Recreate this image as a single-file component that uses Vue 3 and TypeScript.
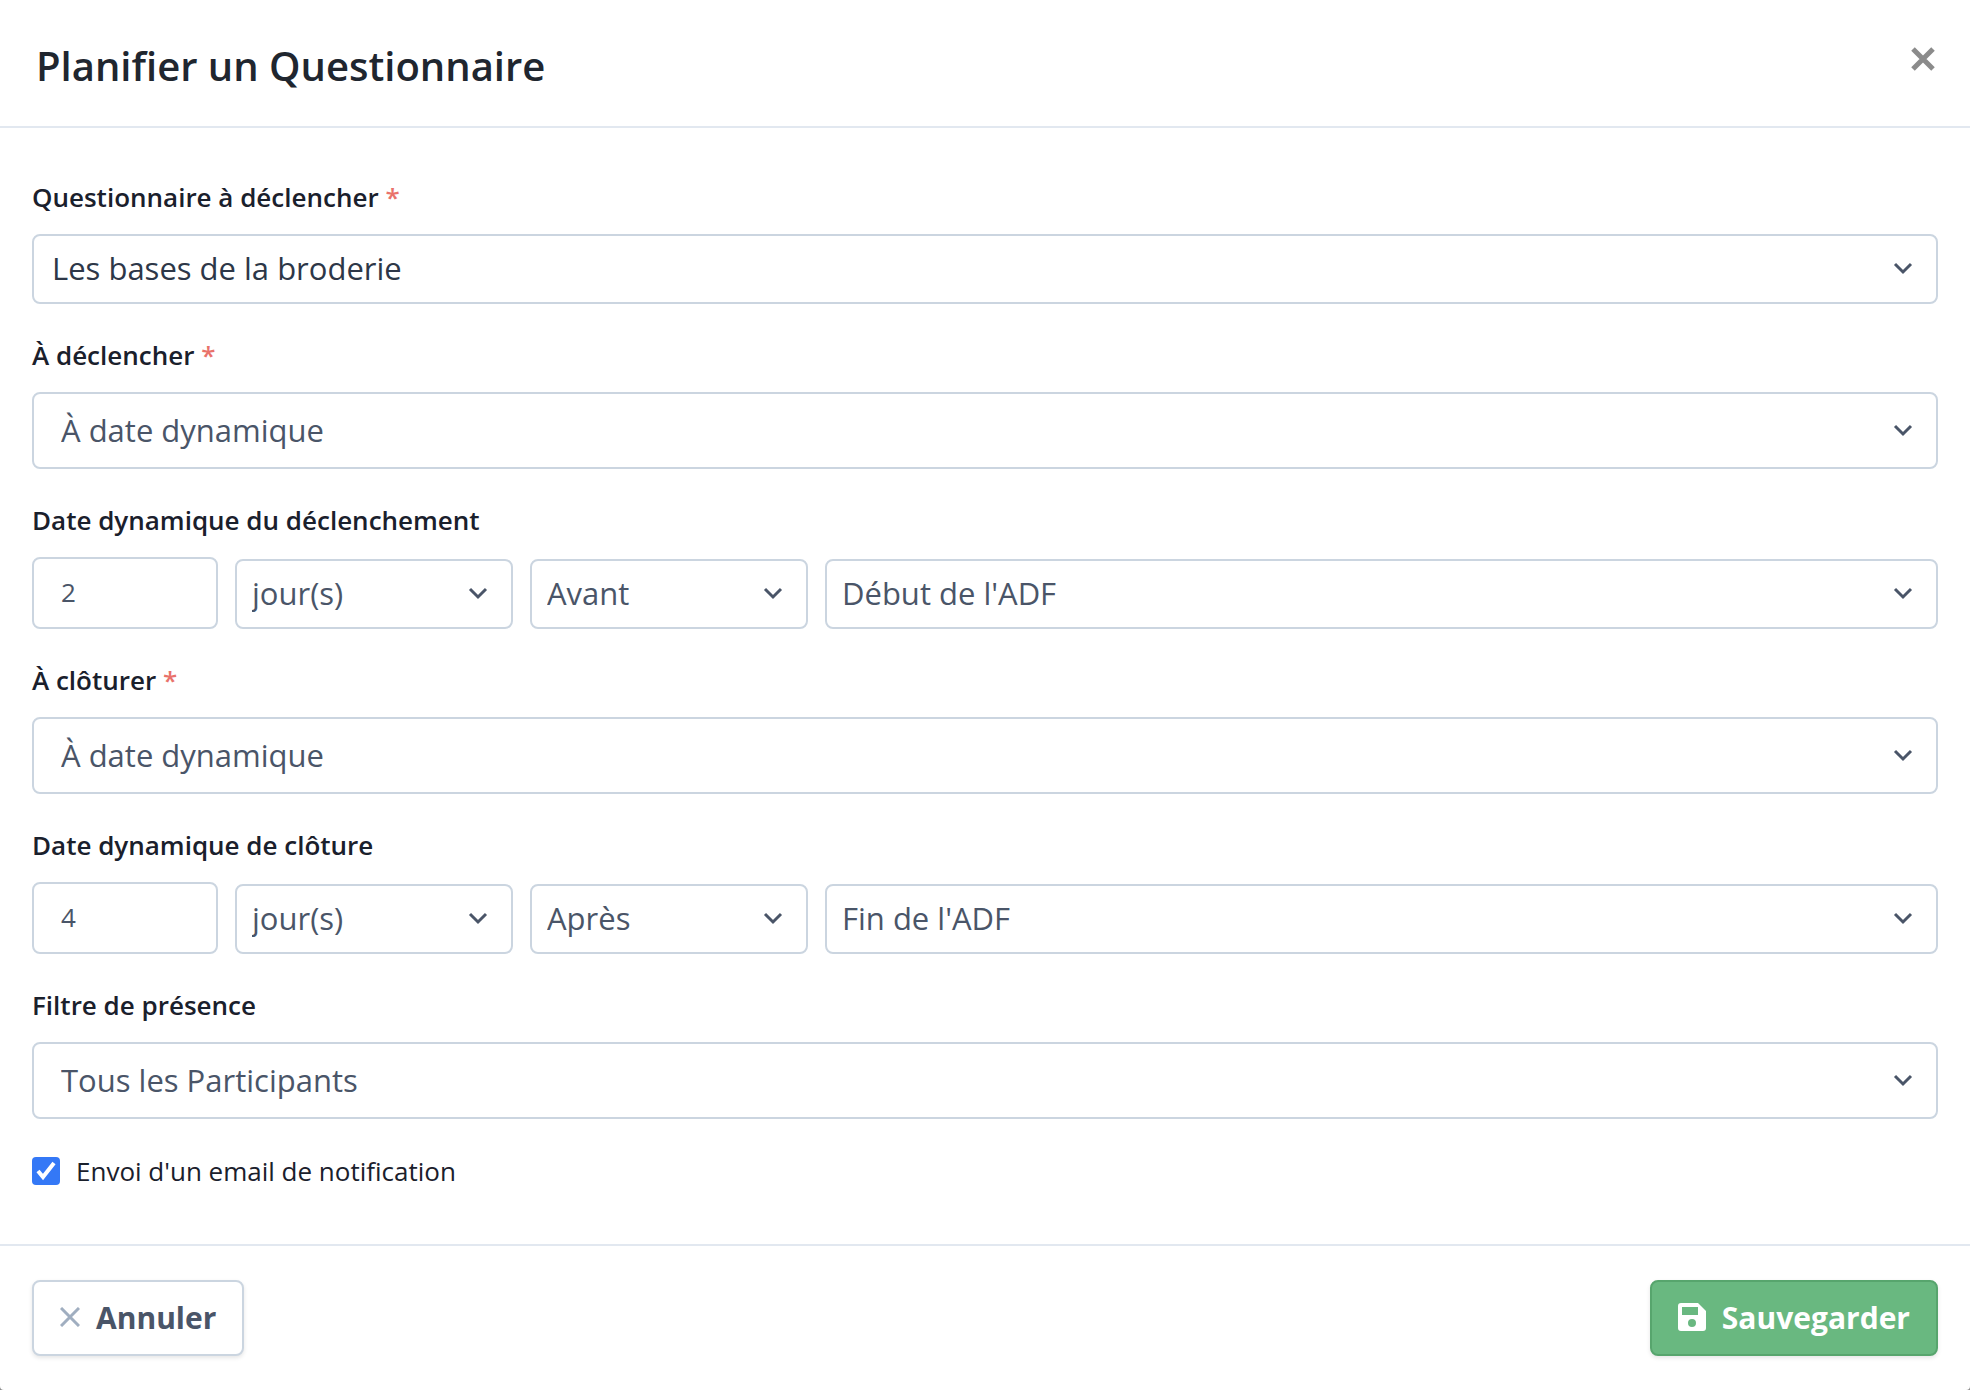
<script setup lang="ts">
import { ref } from 'vue'

interface Field {
  id: string
  label: string
  required: boolean
  options: string[]
  value: string
}

interface DynamicDate {
  id: string
  label: string
  amount: string
  unit: string
  relation: string
  anchor: string
}

const survey = ref<Field>({ id: 'survey', label: 'Questionnaire à déclencher', required: true, options: ['Les bases de la broderie'], value: 'Les bases de la broderie' })
const trigger = ref<Field>({ id: 'trigger', label: 'À déclencher', required: true, options: ['À date dynamique'], value: 'À date dynamique' })
const closing = ref<Field>({ id: 'closing', label: 'À clôturer', required: true, options: ['À date dynamique'], value: 'À date dynamique' })
const presence = ref<Field>({ id: 'presence', label: 'Filtre de présence', required: false, options: ['Tous les Participants'], value: 'Tous les Participants' })

const triggerDate = ref<DynamicDate>({ id: 'trigger-date', label: 'Date dynamique du déclenchement', amount: '2', unit: 'jour(s)', relation: 'Avant', anchor: "Début de l'ADF" })
const closingDate = ref<DynamicDate>({ id: 'closing-date', label: 'Date dynamique de clôture', amount: '4', unit: 'jour(s)', relation: 'Après', anchor: "Fin de l'ADF" })

const rows = [
  { kind: 'select', field: survey, compact: true },
  { kind: 'select', field: trigger, compact: false },
  { kind: 'date', date: triggerDate },
  { kind: 'select', field: closing, compact: false },
  { kind: 'date', date: closingDate },
  { kind: 'select', field: presence, compact: false },
] as const

const units = ['jour(s)']
const relations = ['Avant', 'Après']
const anchors = ["Début de l'ADF", "Fin de l'ADF"]
const notify = ref(true)
</script>

<template>
  <form class="dialog" role="dialog" aria-labelledby="dialog-title" @submit.prevent>
    <header class="header">
      <h1 id="dialog-title" class="title">Planifier un Questionnaire</h1>
      <button type="button" class="close" aria-label="Fermer">
        <svg width="24" height="24" viewBox="0 0 24 24" aria-hidden="true">
          <path d="M2 2 22 22M22 2 2 22" fill="none" stroke="#8b8b8b" stroke-width="5" />
        </svg>
      </button>
    </header>

    <div class="body">
      <template v-for="(row, i) in rows" :key="i">
        <div v-if="row.kind === 'select'" class="field">
          <label class="label" :for="row.field.value.id">{{ row.field.value.label }}<span v-if="row.field.value.required" class="star">&nbsp;*</span></label>
          <div class="select" :class="row.compact ? 'main' : 'tall'">
            <select :id="row.field.value.id" v-model="row.field.value.value">
              <option v-for="o in row.field.value.options" :key="o">{{ o }}</option>
            </select>
            <svg class="chevron" width="20" height="14" viewBox="0 0 20 14" aria-hidden="true"><path d="M2 2 10 10 18 2" /></svg>
          </div>
        </div>

        <div v-else class="field">
          <label class="label" :for="row.date.value.id">{{ row.date.value.label }}</label>
          <div class="date-row">
            <input :id="row.date.value.id" v-model="row.date.value.amount" class="amount" type="text" inputmode="numeric">
            <div class="select">
              <select v-model="row.date.value.unit" aria-label="Unité">
                <option v-for="o in units" :key="o">{{ o }}</option>
              </select>
              <svg class="chevron" width="20" height="14" viewBox="0 0 20 14" aria-hidden="true"><path d="M2 2 10 10 18 2" /></svg>
            </div>
            <div class="select">
              <select v-model="row.date.value.relation" aria-label="Avant ou après">
                <option v-for="o in relations" :key="o">{{ o }}</option>
              </select>
              <svg class="chevron" width="20" height="14" viewBox="0 0 20 14" aria-hidden="true"><path d="M2 2 10 10 18 2" /></svg>
            </div>
            <div class="select">
              <select v-model="row.date.value.anchor" aria-label="Repère">
                <option v-for="o in anchors" :key="o">{{ o }}</option>
              </select>
              <svg class="chevron" width="20" height="14" viewBox="0 0 20 14" aria-hidden="true"><path d="M2 2 10 10 18 2" /></svg>
            </div>
          </div>
        </div>
      </template>

      <label class="check">
        <span class="box">
          <input v-model="notify" type="checkbox">
          <svg v-if="notify" width="28" height="28" viewBox="0 0 28 28" aria-hidden="true"><path d="M6 14 11 20 22 6" /></svg>
        </span>
        Envoi d'un email de notification
      </label>
    </div>

    <footer class="footer">
      <button type="button" class="btn cancel">
        <svg width="20" height="20" viewBox="0 0 20 20" aria-hidden="true">
          <path d="M1 1 19 19M19 1 1 19" fill="none" stroke="#a0aec0" stroke-width="3" />
        </svg>
        Annuler
      </button>
      <button type="submit" class="btn save">
        <svg width="28" height="28" viewBox="0 0 28 28" aria-hidden="true">
          <path fill="#fff" fill-rule="evenodd" d="M3 0H20L28 8V25A3 3 0 0 1 25 28H3A3 3 0 0 1 0 25V3A3 3 0 0 1 3 0ZM4 4V12H20V4ZM14 16A4 4 0 1 0 14 24A4 4 0 1 0 14 16Z" />
        </svg>
        Sauvegarder
      </button>
    </footer>
  </form>
</template>

<style>
body {
  margin: 0;
  background: #8c8c8c;
}
</style>

<style scoped>
.dialog,
.dialog * {
  box-sizing: border-box;
}

.dialog {
  display: flex;
  flex-direction: column;
  min-height: 100vh;
  border-radius: 0 0 4px 4px;
  background: #fff;
  color: #1a202c;
  font-family: 'Open Sans', 'Noto Sans', sans-serif;
  font-size: 26px;
}

button,
input,
select {
  font-family: inherit;
}

.header {
  display: flex;
  align-items: flex-start;
  justify-content: space-between;
  padding: 39px 35px 33px 36px;
  border-bottom: 2px solid #e2e8f0;
}

.title {
  margin: 0;
  color: #20262f;
  font-size: 40px;
  font-weight: 600;
  line-height: 54px;
}

.close {
  display: flex;
  margin-top: 8px;
  padding: 0;
  border: 0;
  background: none;
}

.body {
  display: flex;
  flex-direction: column;
  gap: 32px;
  padding: 50px 32px 53px;
}

.field {
  display: flex;
  flex-direction: column;
  gap: 18px;
}

.label {
  font-weight: 600;
  line-height: 38px;
}

.star {
  color: #e9726b;
}

.select {
  display: grid;
  align-items: center;
  height: 70px;
}

.select > * {
  grid-area: 1 / 1;
}

.select select,
.amount {
  width: 100%;
  height: 100%;
  margin: 0;
  border: 2px solid #cbd5e0;
  border-radius: 8px;
  background: #fff;
  color: #4a5568;
  font-size: 31px;
  appearance: none;
}

.select select {
  padding: 0 56px 2px 15px;
}

.main select {
  padding-left: 18px;
  color: #2d3748;
}

.tall {
  height: 77px;
}

.tall select {
  padding-left: 27px;
}

.chevron {
  justify-self: end;
  margin-right: 25px;
  fill: none;
  stroke: #4a5568;
  stroke-width: 3;
  pointer-events: none;
}

.date-row {
  display: grid;
  grid-template-columns: 186px 278px 278px 1fr;
  align-items: end;
  gap: 17px;
}

.date-row .amount {
  height: 72px;
  padding: 0 27px 2px;
  font-size: 26px;
}

.check {
  display: flex;
  align-items: center;
  gap: 16px;
  line-height: 40px;
}

.box {
  display: grid;
}

.box > * {
  grid-area: 1 / 1;
}

.box input {
  width: 28px;
  height: 28px;
  margin: 0;
  border-radius: 4px;
  background: #3478f6;
  appearance: none;
}

.box svg {
  fill: none;
  stroke: #fff;
  stroke-width: 4;
  pointer-events: none;
}

.footer {
  display: flex;
  justify-content: space-between;
  padding: 34px 32px 33px;
  border-top: 2px solid #e2e8f0;
}

.btn {
  display: flex;
  align-items: center;
  gap: 16px;
  height: 76px;
  padding: 0 26px 2px;
  border: 2px solid #cbd5e0;
  border-radius: 8px;
  background: #fff;
  box-shadow: 0 2px 4px rgba(0, 0, 0, 0.1);
  color: #4a5568;
  font-size: 30px;
  font-weight: 700;
}

.save {
  border-color: #57a56d;
  background: #69b880;
  color: #fff;
}
</style>
